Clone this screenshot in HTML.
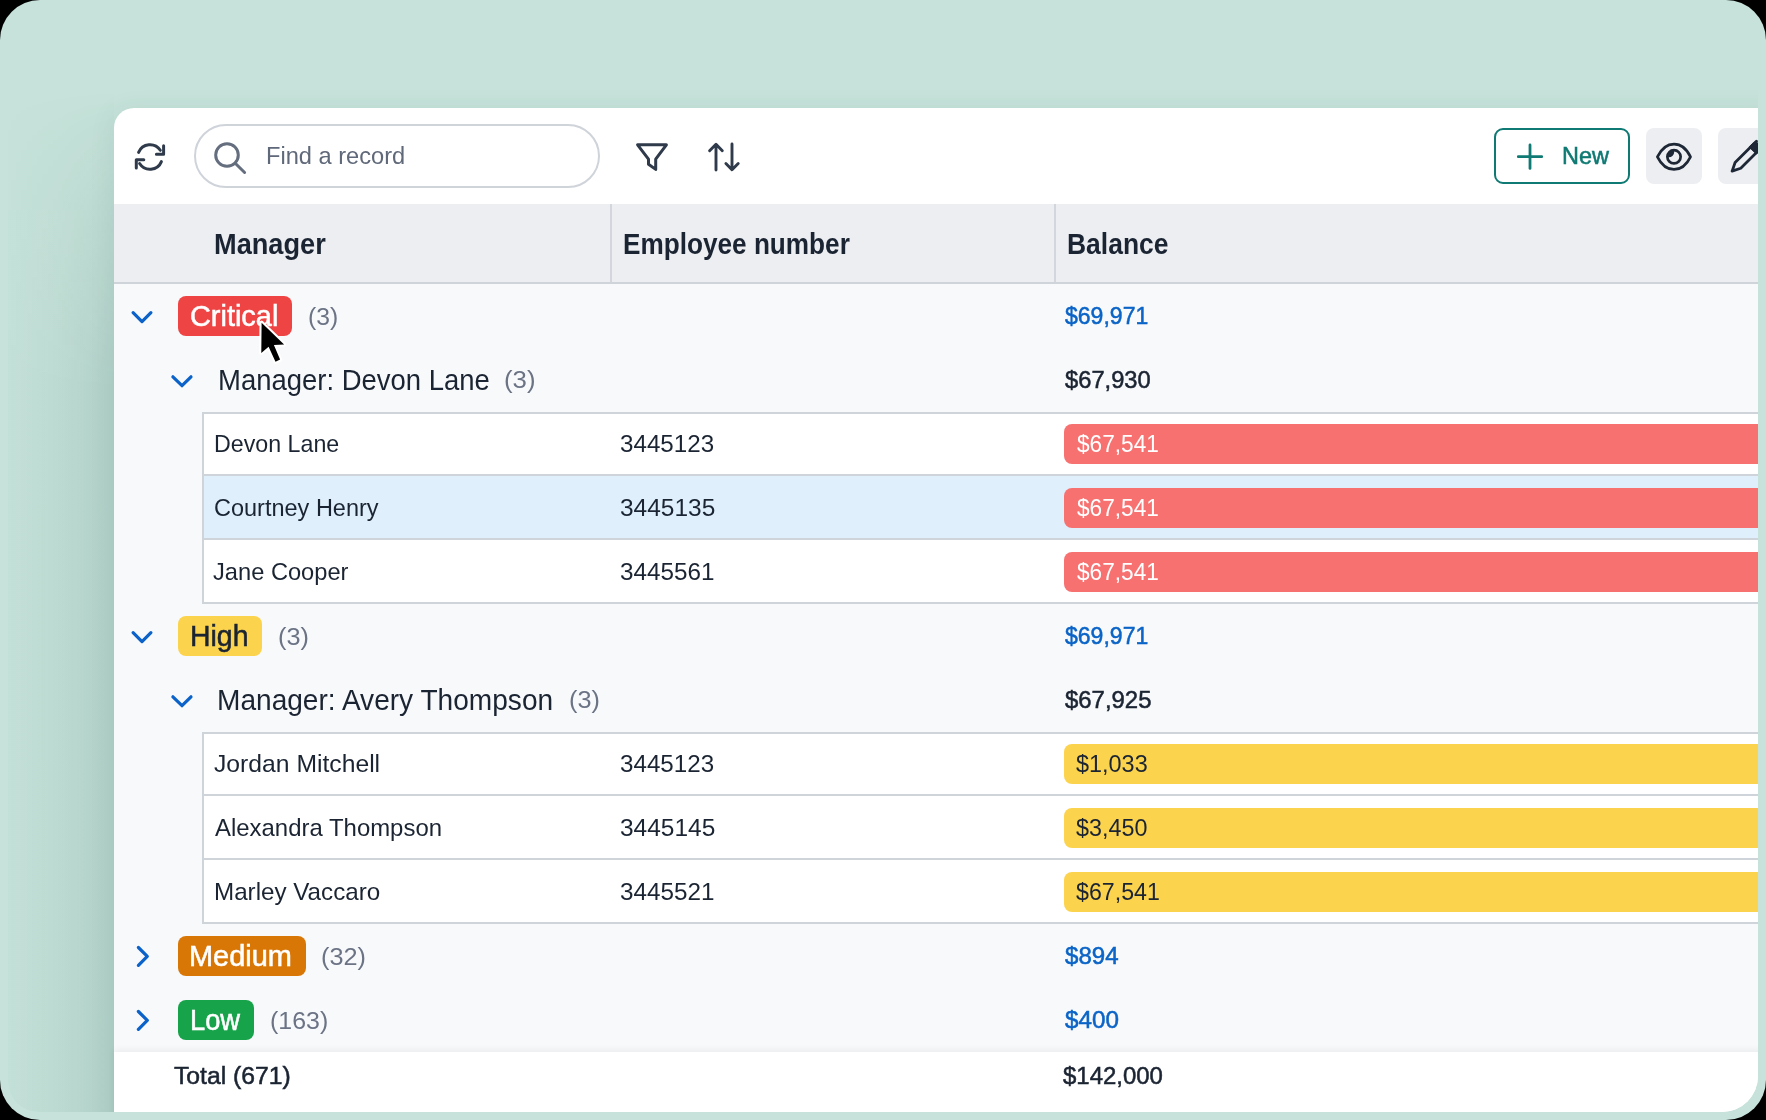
<!DOCTYPE html>
<html><head><meta charset="utf-8">
<style>
html,body{margin:0;padding:0;width:1766px;height:1120px;overflow:hidden;background:#000;}
.frame{position:absolute;left:0;top:0;width:1766px;height:1120px;border-radius:40px;background:#c6e2da;overflow:hidden}
.clip{position:absolute;left:8px;top:8px;width:1750px;height:1104px;border-radius:30px 0 36px 30px;overflow:hidden}
.panel{position:absolute;left:106px;top:100px;width:1800px;height:1100px;background:#fff;border-top-left-radius:20px;
  box-shadow:-4px 0 24px rgba(20,80,65,0.06)}
.sstrip{position:absolute;left:0;top:82px;width:106px;height:1022px;border-bottom-left-radius:30px;
  background:linear-gradient(to right, rgba(15,70,58,0.012), rgba(15,70,58,0.05) 50%, rgba(15,70,58,0.12));
  -webkit-mask-image:linear-gradient(to bottom, transparent 0, rgba(0,0,0,0.5) 120px, #000 300px)}
.inner{position:absolute;left:-8px;top:-8px;width:1766px;height:1120px}
.t{position:absolute;white-space:nowrap;line-height:40px;font-family:"Liberation Sans",sans-serif;transform-origin:0 0}
.bar{position:absolute;left:1064px;width:800px;height:40px;border-radius:8px}
.badge{position:absolute;height:40px;border-radius:8px}
.ov{position:absolute;left:0;top:0}
</style></head><body>
<div class="frame">
 <div class="clip">
  <div class="sstrip"></div>
  <div class="panel"></div>
  <div class="inner">
   <div style="position:absolute;left:114px;top:204px;width:1700px;height:78px;background:#edeef2"></div><div style="position:absolute;left:114px;top:282px;width:1700px;height:2px;background:#cfd3da"></div><div style="position:absolute;left:610px;top:204px;width:2px;height:78px;background:#d3d6dc"></div><div style="position:absolute;left:1054px;top:204px;width:2px;height:78px;background:#d3d6dc"></div><div style="position:absolute;left:114px;top:284px;width:1700px;height:768px;background:#f8f9fb"></div><div style="position:absolute;left:202px;top:412px;width:1700px;height:192px;background:#fff;border-left:2px solid #cfd3da;box-sizing:border-box"></div><div style="position:absolute;left:202px;top:412px;width:1700px;height:2px;background:#cfd3da"></div><div style="position:absolute;left:202px;top:474px;width:1700px;height:2px;background:#cfd3da"></div><div style="position:absolute;left:202px;top:538px;width:1700px;height:2px;background:#cfd3da"></div><div style="position:absolute;left:202px;top:602px;width:1700px;height:2px;background:#cfd3da"></div><div style="position:absolute;left:202px;top:732px;width:1700px;height:192px;background:#fff;border-left:2px solid #cfd3da;box-sizing:border-box"></div><div style="position:absolute;left:202px;top:732px;width:1700px;height:2px;background:#cfd3da"></div><div style="position:absolute;left:202px;top:794px;width:1700px;height:2px;background:#cfd3da"></div><div style="position:absolute;left:202px;top:858px;width:1700px;height:2px;background:#cfd3da"></div><div style="position:absolute;left:202px;top:922px;width:1700px;height:2px;background:#cfd3da"></div><div style="position:absolute;left:204px;top:476px;width:1700px;height:62px;background:#dff0fc"></div><div class="bar" style="top:424px;background:#f87171"></div><div class="bar" style="top:744px;background:#fcd34d"></div><div class="bar" style="top:488px;background:#f87171"></div><div class="bar" style="top:808px;background:#fcd34d"></div><div class="bar" style="top:552px;background:#f87171"></div><div class="bar" style="top:872px;background:#fcd34d"></div><div class="badge" style="left:178px;top:296px;width:114px;background:#ef4444"></div><div class="badge" style="left:178px;top:616px;width:84px;background:#fcd34d"></div><div class="badge" style="left:178px;top:936px;width:128px;background:#d97706"></div><div class="badge" style="left:178px;top:1000px;width:76px;background:#16a34a"></div><div style="position:absolute;left:114px;top:1052px;width:1700px;height:100px;background:#fff;box-shadow:0 -2px 7px rgba(0,0,0,0.06)"></div><div style="position:absolute;left:194px;top:124px;width:406px;height:64px;border:2px solid #cfd3da;border-radius:32px;box-sizing:border-box;background:#fff"></div><div style="position:absolute;left:1494px;top:128px;width:136px;height:56px;border:2px solid #0f7a73;border-radius:9px;box-sizing:border-box"></div><div style="position:absolute;left:1646px;top:128px;width:56px;height:56px;border-radius:8px;background:#edeef2"></div><div style="position:absolute;left:1718px;top:128px;width:56px;height:56px;border-radius:8px;background:#edeef2"></div>
   <div class="t" style="left:266.19px;top:136.41px;font-size:24.8px;font-weight:normal;color:#606979;transform:scaleX(0.9530);">Find a record</div><div class="t" style="left:1561.58px;top:136.41px;font-size:24.8px;font-weight:normal;color:#0f7a73;transform:scaleX(0.9453);-webkit-text-stroke:0.55px #0f7a73;">New</div><div class="t" style="left:213.80px;top:224.17px;font-size:28.94px;font-weight:bold;color:#1b2432;transform:scaleX(0.9391);">Manager</div><div class="t" style="left:623.32px;top:223.77px;font-size:28.94px;font-weight:bold;color:#1b2432;transform:scaleX(0.9042);">Employee number</div><div class="t" style="left:1067.23px;top:223.97px;font-size:28.94px;font-weight:bold;color:#1b2432;transform:scaleX(0.9145);">Balance</div><div class="t" style="left:190.27px;top:295.97px;font-size:28.94px;font-weight:normal;color:#ffffff;transform:scaleX(0.9986);-webkit-text-stroke:0.55px #ffffff;">Critical</div><div class="t" style="left:308.02px;top:296.91px;font-size:24.8px;font-weight:normal;color:#6b7385;transform:scaleX(0.9962);">(3)</div><div class="t" style="left:1064.92px;top:295.61px;font-size:24.8px;font-weight:normal;color:#0b64c6;transform:scaleX(0.9287);-webkit-text-stroke:0.55px #0b64c6;">$69,971</div><div class="t" style="left:217.63px;top:359.97px;font-size:28.94px;font-weight:normal;color:#1b2432;transform:scaleX(0.9494);">Manager: Devon Lane</div><div class="t" style="left:504.19px;top:359.91px;font-size:24.8px;font-weight:normal;color:#6b7385;transform:scaleX(1.0398);">(3)</div><div class="t" style="left:1064.94px;top:360.21px;font-size:24.8px;font-weight:normal;color:#1b2432;transform:scaleX(0.9564);-webkit-text-stroke:0.55px #1b2432;">$67,930</div><div class="t" style="left:213.89px;top:424.41px;font-size:24.8px;font-weight:normal;color:#1b2432;transform:scaleX(0.9363);">Devon Lane</div><div class="t" style="left:619.77px;top:424.41px;font-size:24.8px;font-weight:normal;color:#1b2432;transform:scaleX(0.9744);">3445123</div><div class="t" style="left:1076.57px;top:424.41px;font-size:24.8px;font-weight:normal;color:#ffffff;transform:scaleX(0.9126);">$67,541</div><div class="t" style="left:213.80px;top:488.41px;font-size:24.8px;font-weight:normal;color:#1b2432;transform:scaleX(0.9477);">Courtney Henry</div><div class="t" style="left:619.66px;top:488.41px;font-size:24.8px;font-weight:normal;color:#1b2432;transform:scaleX(0.9872);">3445135</div><div class="t" style="left:1076.57px;top:488.41px;font-size:24.8px;font-weight:normal;color:#ffffff;transform:scaleX(0.9126);">$67,541</div><div class="t" style="left:213.45px;top:552.41px;font-size:24.8px;font-weight:normal;color:#1b2432;transform:scaleX(0.9541);">Jane Cooper</div><div class="t" style="left:619.69px;top:552.41px;font-size:24.8px;font-weight:normal;color:#1b2432;transform:scaleX(0.9783);">3445561</div><div class="t" style="left:1076.57px;top:552.41px;font-size:24.8px;font-weight:normal;color:#ffffff;transform:scaleX(0.9126);">$67,541</div><div class="t" style="left:190.03px;top:615.97px;font-size:28.94px;font-weight:normal;color:#1b2432;transform:scaleX(0.9824);-webkit-text-stroke:0.55px #1b2432;">High</div><div class="t" style="left:277.61px;top:616.91px;font-size:24.8px;font-weight:normal;color:#6b7385;transform:scaleX(1.0188);">(3)</div><div class="t" style="left:1064.92px;top:615.61px;font-size:24.8px;font-weight:normal;color:#0b64c6;transform:scaleX(0.9287);-webkit-text-stroke:0.55px #0b64c6;">$69,971</div><div class="t" style="left:217.40px;top:679.97px;font-size:28.94px;font-weight:normal;color:#1b2432;transform:scaleX(0.9704);">Manager: Avery Thompson</div><div class="t" style="left:569.35px;top:679.91px;font-size:24.8px;font-weight:normal;color:#6b7385;transform:scaleX(1.0188);">(3)</div><div class="t" style="left:1064.77px;top:680.21px;font-size:24.8px;font-weight:normal;color:#1b2432;transform:scaleX(0.9642);-webkit-text-stroke:0.55px #1b2432;">$67,925</div><div class="t" style="left:213.78px;top:744.41px;font-size:24.8px;font-weight:normal;color:#1b2432;transform:scaleX(0.9961);">Jordan Mitchell</div><div class="t" style="left:619.77px;top:744.41px;font-size:24.8px;font-weight:normal;color:#1b2432;transform:scaleX(0.9744);">3445123</div><div class="t" style="left:1076.24px;top:744.41px;font-size:24.8px;font-weight:normal;color:#1b2432;transform:scaleX(0.9450);">$1,033</div><div class="t" style="left:214.87px;top:808.41px;font-size:24.8px;font-weight:normal;color:#1b2432;transform:scaleX(0.9649);">Alexandra Thompson</div><div class="t" style="left:619.66px;top:808.41px;font-size:24.8px;font-weight:normal;color:#1b2432;transform:scaleX(0.9872);">3445145</div><div class="t" style="left:1076.22px;top:808.41px;font-size:24.8px;font-weight:normal;color:#1b2432;transform:scaleX(0.9409);">$3,450</div><div class="t" style="left:213.57px;top:872.41px;font-size:24.8px;font-weight:normal;color:#1b2432;transform:scaleX(0.9751);">Marley Vaccaro</div><div class="t" style="left:619.69px;top:872.41px;font-size:24.8px;font-weight:normal;color:#1b2432;transform:scaleX(0.9783);">3445521</div><div class="t" style="left:1076.37px;top:872.41px;font-size:24.8px;font-weight:normal;color:#1b2432;transform:scaleX(0.9353);">$67,541</div><div class="t" style="left:189.30px;top:935.97px;font-size:28.94px;font-weight:normal;color:#ffffff;transform:scaleX(0.9992);-webkit-text-stroke:0.55px #ffffff;">Medium</div><div class="t" style="left:321.07px;top:936.91px;font-size:24.8px;font-weight:normal;color:#6b7385;transform:scaleX(1.0183);">(32)</div><div class="t" style="left:1064.94px;top:935.61px;font-size:24.8px;font-weight:normal;color:#0b64c6;transform:scaleX(0.9709);-webkit-text-stroke:0.55px #0b64c6;">$894</div><div class="t" style="left:189.72px;top:999.97px;font-size:28.94px;font-weight:normal;color:#ffffff;transform:scaleX(0.9423);-webkit-text-stroke:0.55px #ffffff;">Low</div><div class="t" style="left:269.70px;top:1000.91px;font-size:24.8px;font-weight:normal;color:#6b7385;transform:scaleX(1.0052);">(163)</div><div class="t" style="left:1064.94px;top:999.61px;font-size:24.8px;font-weight:normal;color:#0b64c6;transform:scaleX(0.9767);-webkit-text-stroke:0.55px #0b64c6;">$400</div><div class="t" style="left:174.02px;top:1056.41px;font-size:24.8px;font-weight:normal;color:#1b2432;transform:scaleX(0.9968);-webkit-text-stroke:0.55px #1b2432;">Total (671)</div><div class="t" style="left:1062.94px;top:1056.41px;font-size:24.8px;font-weight:normal;color:#1b2432;transform:scaleX(0.9661);-webkit-text-stroke:0.55px #1b2432;">$142,000</div>
   
<svg class="ov" width="1766" height="1120" viewBox="0 0 1766 1120">
 <g fill="none" stroke-linecap="round" stroke-linejoin="round">
  <!-- refresh -->
  <g stroke="#2f3a4b" stroke-width="3">
   <path d="M138.6,152.4 A12.3,12.3 0 0 1 160.3,150.3"/>
   <path d="M163.6,145.8 L163.6,154.2 L156.4,154.2"/>
   <path d="M161.4,161.6 A12.3,12.3 0 0 1 139.6,163.5"/>
   <path d="M143.8,159.8 L136.3,159.8 L136.3,168"/>
  </g>
  <!-- search -->
  <g stroke="#646e7e" stroke-width="3">
   <circle cx="227" cy="155" r="11.3"/>
   <path d="M235.5,163.5 L244.6,172.5"/>
  </g>
  <!-- filter -->
  <path stroke="#2f3a4b" stroke-width="3" d="M637.6,144.8 L666.4,144.8 L655.7,159.1 L655.7,169.4 L648.5,164.3 L648.5,159.1 Z"/>
  <!-- sort -->
  <path stroke="#2f3a4b" stroke-width="2.9" d="M716,170 V144.5 M709.6,150.8 L716,144.3 L722.3,150.8 M732,144 V169.5 M725.9,163.5 L732,169.8 L738.2,163.5"/>
  <!-- plus -->
  <path stroke="#0f7a73" stroke-width="2.8" d="M1518.3,156.7 H1541.7 M1530,145 V168.4"/>
  <!-- eye -->
  <g stroke="#1e2735" stroke-width="2.7">
   <path d="M1657.4,156.8 C1661,149.5 1667,144.1 1674,144.1 C1681,144.1 1687,149.5 1690.5,156.8 C1687,164 1681,169.4 1674,169.4 C1667,169.4 1661,164 1657.4,156.8 Z"/>
   <circle cx="1674" cy="156.8" r="6.65"/>
  </g>
  <path fill="#1e2735" d="M1668.8,157.3 A5.4,5.4 0 0 0 1674.2,151.9 L1674.1,150.2 A6.6,6.6 0 0 0 1667.4,157.3 Z"/>
  <!-- pencil -->
  <g transform="translate(1731,172.3) rotate(-45)">
   <path stroke="#1e2735" stroke-width="2.8" d="M1.6,0 L9.8,-4.0 H40 M1.6,0 L9.8,4.0 H40"/>
   <rect x="30.5" y="-5.4" width="9.5" height="10.8" rx="3.5" fill="#1e2735"/>
   <rect x="30.5" y="-5.4" width="5" height="10.8" fill="#1e2735"/>
  </g>
  <!-- chevrons -->
  <g stroke="#0b62c9" stroke-width="3.2">
   <path d="M133.1,312.7 L142,321.6 L150.9,312.7"/>
   <path d="M172.9,376.8 L182,385.7 L191,376.8"/>
   <path d="M133.1,632.7 L142,641.6 L150.9,632.7"/>
   <path d="M172.9,696.8 L182,705.7 L191,696.8"/>
   <path d="M138.4,947.5 L147.3,956.4 L138.4,965.4"/>
   <path d="M138.4,1011.5 L147.3,1020.4 L138.4,1029.4"/>
  </g>
 </g>
 <!-- cursor -->
 <path fill="#fff" stroke="#fff" stroke-width="4.2" stroke-linejoin="round"
   d="M261.6,322.7 L261.3,352.9 L268.6,346.8 L275.5,361.8 L280.1,359.6 L273.9,344.9 L284.1,344.6 Z"/>
 <path fill="#000"
   d="M261.6,322.7 L261.3,352.9 L268.6,346.8 L275.5,361.8 L280.1,359.6 L273.9,344.9 L284.1,344.6 Z"/>
</svg>
  </div>
 </div>
</div>
</body></html>
